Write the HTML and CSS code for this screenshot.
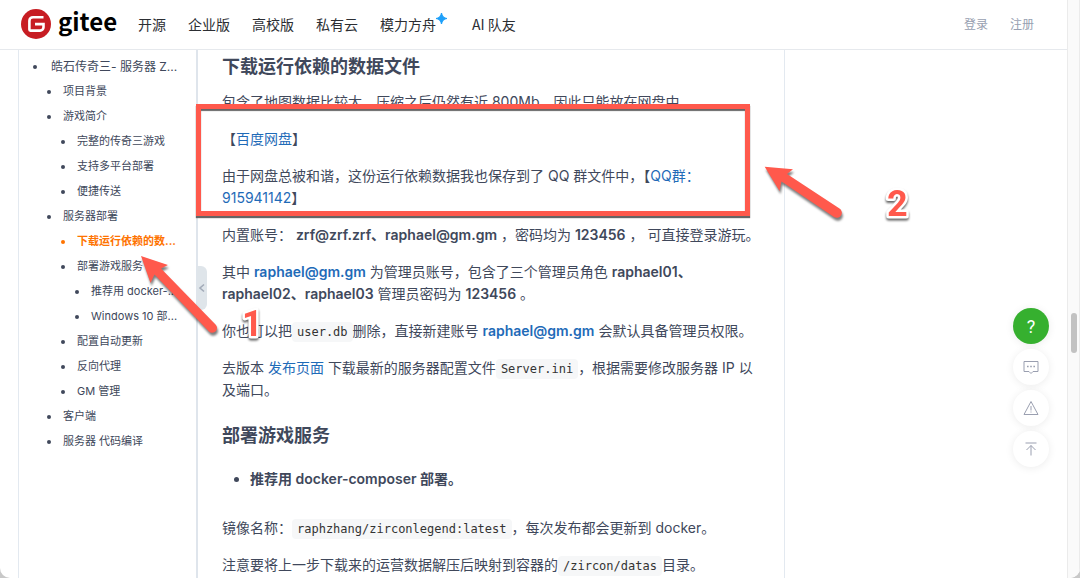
FILE: index.html
```html
<!DOCTYPE html>
<html lang="zh-CN">
<head>
    <meta charset="UTF-8">
    <meta name="viewport" content="width=device-width, initial-scale=1.0">
    <title>Gitee</title>
    <link rel="stylesheet" href="styles.css">
</head>
<body>

<div class="page">
    <header class="header">
        <a class="logo" href="#">
            <svg class="logo-icon" viewBox="0 0 30 30" aria-hidden="true">
                <circle cx="15" cy="15" r="15" fill="#c71d23"/>
                <path d="M22.5 8.2H12a3.6 3.6 0 0 0-3.6 3.6v8.8a1 1 0 0 0 1 1h9.7a3.4 3.4 0 0 0 3.4-3.4v-3.1H14" fill="none" stroke="#fff" stroke-width="2.6"/>
            </svg>
            <span class="logo-text">gitee</span>
        </a>
        <nav class="nav">
            <a href="#">开源</a>
            <a href="#">企业版</a>
            <a href="#">高校版</a>
            <a href="#">私有云</a>
            <a class="nav-star" href="#">模力方舟<svg class="star" viewBox="0 0 10 10" aria-hidden="true"><path d="M5 0Q5.6 4.4 10 5Q5.6 5.6 5 10Q4.4 5.6 0 5Q4.4 4.4 5 0Z" fill="#1ea0fa" stroke="#1ea0fa"/></svg></a>
            <a href="#">AI 队友</a>
        </nav>
        <div class="user-links">
            <a href="#">登录</a>
            <a href="#">注册</a>
        </div>
    </header>

    <div class="content">
        <aside class="sidebar">
            <ul class="toc">
                <li class="level1"><a href="#">皓石传奇三- 服务器 Z...</a></li>
                <li class="level2"><a href="#">项目背景</a></li>
                <li class="level2"><a href="#">游戏简介</a></li>
                <li class="level3"><a href="#">完整的传奇三游戏</a></li>
                <li class="level3"><a href="#">支持多平台部署</a></li>
                <li class="level3"><a href="#">便捷传送</a></li>
                <li class="level2"><a href="#">服务器部署</a></li>
                <li class="level3 active"><a href="#">下载运行依赖的数...</a></li>
                <li class="level3"><a href="#">部署游戏服务</a></li>
                <li class="level4"><a href="#">推荐用 docker-...</a></li>
                <li class="level4"><a href="#">Windows 10 部...</a></li>
                <li class="level3"><a href="#">配置自动更新</a></li>
                <li class="level3"><a href="#">反向代理</a></li>
                <li class="level3"><a href="#">GM 管理</a></li>
                <li class="level2"><a href="#">客户端</a></li>
                <li class="level2"><a href="#">服务器 代码编译</a></li>
            </ul>
            <button class="collapse" aria-label="收起目录">
                <svg viewBox="0 0 10 10" aria-hidden="true"><path d="M7 1.5L3 5l4 3.5" fill="none" stroke="#a3abb8" stroke-width="1.6"/></svg>
            </button>
        </aside>

        <main class="readme">
            <h3>下载运行依赖的数据文件</h3>
            <p>包含了地图数据比较大，压缩之后仍然有近 800Mb，因此只能放在网盘中。</p>
            <p>【<a href="#">百度网盘</a>】</p>
            <p>由于网盘总被和谐，这份运行依赖数据我也保存到了 QQ 群文件中，【<a href="#">QQ群：915941142</a>】</p>
            <p>内置账号： <strong>zrf@zrf.zrf、raphael@gm.gm</strong> ，密码均为 <strong>123456</strong> ， 可直接登录游玩。</p>
            <p>其中 <strong><a href="#">raphael@gm.gm</a></strong> 为管理员账号，包含了三个管理员角色 <strong>raphael01、raphael02、raphael03</strong> 管理员密码为 <strong>123456</strong> 。</p>
            <p>你也可以把<code>user.db</code>删除，直接新建账号 <strong><a href="#">raphael@gm.gm</a></strong> 会默认具备管理员权限。</p>
            <p>去版本 <a href="#">发布页面</a> 下载最新的服务器配置文件<code>Server.ini</code>，根据需要修改服务器 IP 以及端口。</p>
            <h3>部署游戏服务</h3>
            <ul>
                <li><strong>推荐用 docker-composer 部署。</strong></li>
            </ul>
            <p>镜像名称：<code>raphzhang/zirconlegend:latest</code>，每次发布都会更新到 docker。</p>
            <p>注意要将上一步下载来的运营数据解压后映射到容器的<code>/zircon/datas</code>目录。</p>
        </main>
    </div>

    <div class="toolbar">
        <button class="tool help" aria-label="帮助">?</button>
        <button class="tool" aria-label="反馈">
            <svg viewBox="0 0 16 16"><path d="M1 2.5h14v10h-5l-2 2-2-2H1z"/><path d="M4 7.5h1.6M7.2 7.5h1.6M10.4 7.5H12" stroke-width="1.6"/></svg>
        </button>
        <button class="tool" aria-label="举报">
            <svg viewBox="0 0 16 16"><path d="M8 1.5L15 14.5H1z"/><path d="M8 6v4.5M8 11.5v1"/></svg>
        </button>
        <button class="tool" aria-label="回到顶部">
            <svg viewBox="0 0 16 16"><path d="M2.5 2h11M8 14.5V4.5M3.5 9L8 4.5 12.5 9"/></svg>
        </button>
    </div>
</div>

<div class="scrollbar"><div class="thumb"></div></div>

<!-- step marks on top of the page -->
<div class="mark-frame"></div>
<svg class="marks" width="1080" height="578" viewBox="0 0 1080 578">
    <g class="arrow">
        <path d="M141 256L168 265L161 268.500L215.500 324.500A4.700 4.700 0 0 1 209 331.500L154.500 274.500L150.500 283Z"/>
        <path d="M764.700 166.700L793 169.300L787 174L839.500 208.500A5 5 0 0 1 834 217L781.500 181.500L779.500 191Z"/>
    </g>
    <g class="number">
        <text x="242" y="336">1</text>
        <text x="887" y="216">2</text>
    </g>
</svg>

</body>
</html>
```
FILE: styles.css
```css
* { box-sizing: border-box; }
html { background: #c8c8c8; }
body { margin: 0; height: 100vh; display: flex; position: relative; overflow: hidden; background: #fff; border-radius: 0 0 10px 10px; color: #40485b; font-family: Inter, "Noto Sans CJK SC", sans-serif; font-size: 14px; line-height: 22px; }
a { color: #1f6bb8; text-decoration: none; }
button { border: none; padding: 0; cursor: pointer; }

.page { flex: 1; min-width: 0; display: flex; flex-direction: column; position: relative; }

.header { flex: none; display: flex; align-items: center; height: 50px; padding: 0 33px 2px 21px; border-bottom: 1px solid #e6e9ed; font-family: "Noto Sans CJK SC", sans-serif; }
.logo { display: flex; align-items: center; gap: 7px; width: 117px; color: #000; }
.logo-icon { width: 30px; height: 30px; }
.logo-text { font-size: 24px; font-weight: bold; line-height: 30px; padding-bottom: 5px; }
.nav { display: flex; gap: 22px; }
.nav a { color: #2c2e33; }
.nav-star { display: flex; padding-right: 3px; }
.star { width: 11px; height: 11px; }
.user-links { display: flex; gap: 22px; margin-left: auto; font-size: 12px; }
.user-links a { color: #979fb1; }

.content { flex: 1; min-height: 0; display: flex; margin-left: 18px; border-left: 1px solid #e3e9f0; }
.sidebar { flex: none; width: 179px; position: relative; border-right: 2px solid #dfe5ec; }
.toc { list-style: none; margin: 0; padding: 4px 0 0; font-size: 11px; line-height: 25px; white-space: nowrap; }
.toc li { display: flex; align-items: center; }
.toc a { color: #40485b; }
.toc li::before { content: ""; width: 4px; height: 4px; margin-right: 12px; border-radius: 50%; background: #40485b; }
.toc .level1::before { margin-right: 14px; }
.toc .level1 { padding-left: 14px; font-size: 12px; }
.level2 { padding-left: 28px; }
.level3 { padding-left: 42px; }
.level4 { padding-left: 56px; }
.toc .active a { color: #fe7300; font-weight: bold; }
.toc .active::before { background: #fe7300; }
.collapse { position: absolute; left: 178px; top: 216px; width: 10px; height: 44px; background: #dfe5ea; border-radius: 0 6px 6px 0; }
.collapse svg { display: block; width: 10px; height: 10px; }

.readme { width: 587px; padding: 4px 23px 0 24px; border-right: 1px solid #e3e9f0; overflow: hidden; }
.readme h3 { margin: 0 0 11px; font-size: 18px; line-height: 26px; font-weight: bold; }
.readme p { margin: 0 0 15px; }
.readme p + h3 { margin: 22px 0 19px; }
.readme ul { margin: 0 0 27px; padding-left: 28px; }
.readme strong { font-weight: 600; }
.readme code { padding: 3px 5px; border-radius: 4px; background: #f6f7f8; color: #333; font-family: "DejaVu Sans Mono", monospace; font-size: 12px; line-height: 18px; }

.toolbar { position: absolute; right: 18px; top: 308px; display: flex; flex-direction: column; gap: 5px; }
.tool { display: flex; align-items: center; justify-content: center; width: 36px; height: 36px; border-radius: 50%; background: #fff; box-shadow: 0 1px 8px rgba(0, 0, 0, 0.08); }
.tool svg { width: 16px; height: 16px; fill: none; stroke: #9a9fb0; }
.help { background: #36b02f; color: #fff; font-family: Roboto, sans-serif; font-size: 18px; }

.scrollbar { flex: none; width: 13px; padding: 313px 2px 0 3px; background: #fafafa; border-left: 1px solid #ebebeb; border-right: 1px solid #ebebeb; }
.thumb { height: 40px; border-radius: 4px; background: #c2c2c2; }

.mark-frame { position: absolute; left: 196px; top: 104px; width: 554px; height: 112px; border: 5px solid #ff594c; box-shadow: 0 2px 1px #666, inset 0 2px 1px #666; }
.marks { position: absolute; left: 0; top: 0; pointer-events: none; }
.arrow { fill: #ff594c; filter: drop-shadow(1px 3px 1px rgba(0, 0, 0, 0.5)); }
.number { fill: #ff594c; stroke: #fff; stroke-width: 5px; stroke-linejoin: round; paint-order: stroke; font-family: Roboto, sans-serif; font-size: 36px; font-weight: bold; filter: drop-shadow(0 2px 1px rgba(0, 0, 0, 0.6)); }
```
